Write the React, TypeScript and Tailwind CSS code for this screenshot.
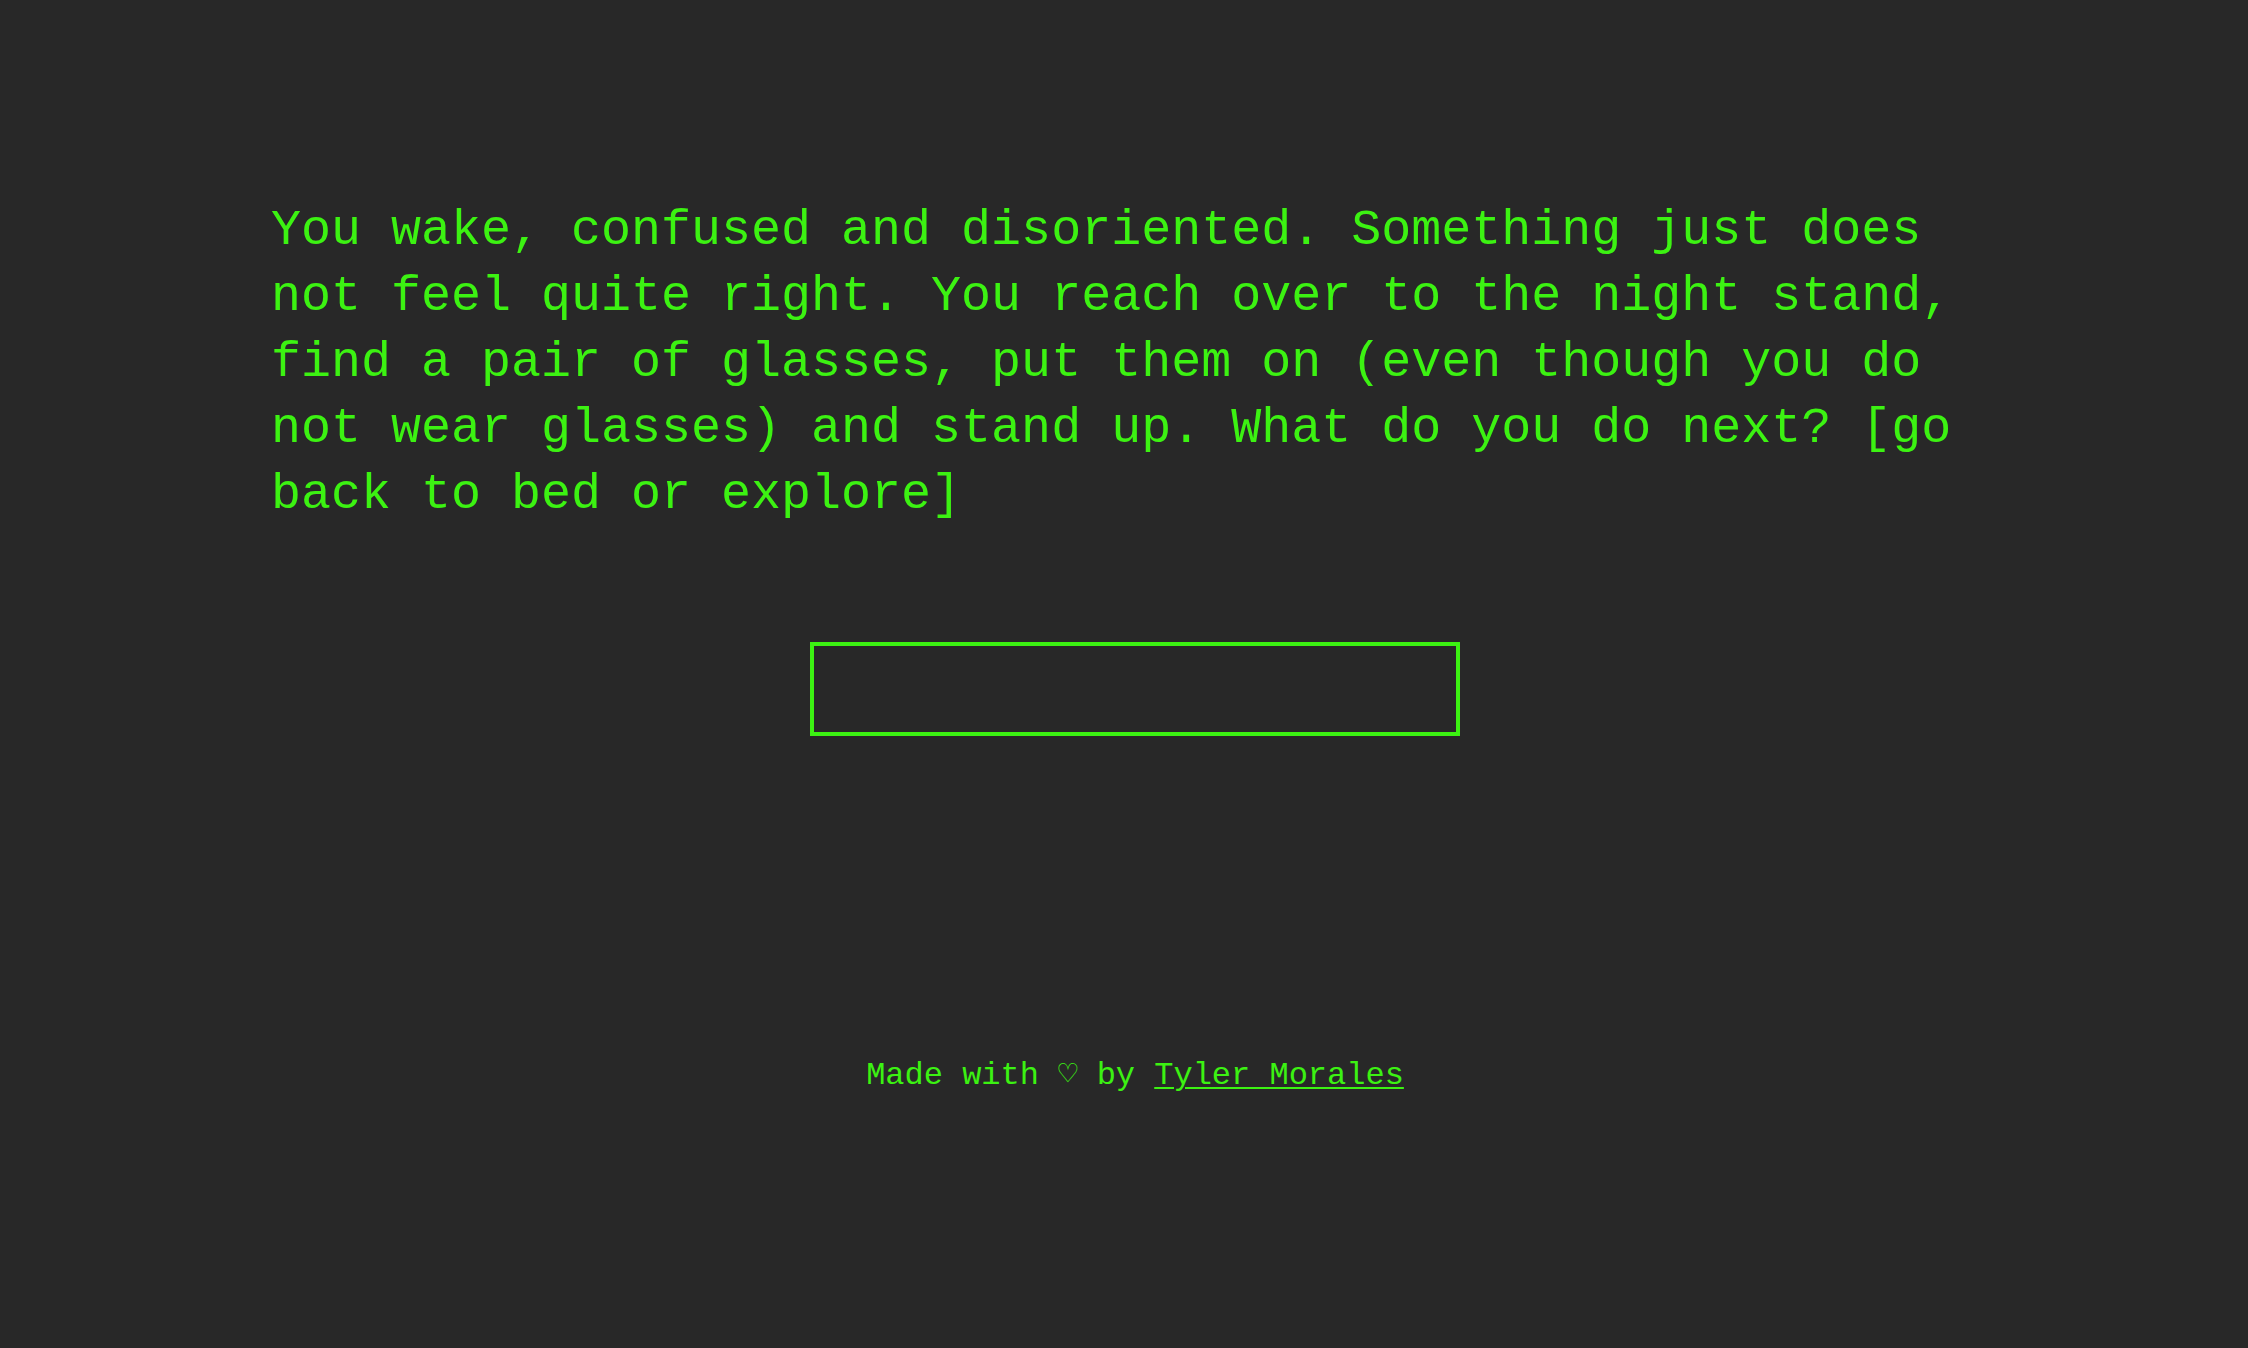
import React from "react";

export default function App() {
  return (
    <div
      className="min-h-[1348px] w-full bg-[#282828] text-[#3cf212]"
      style={{ fontFamily: '"Liberation Mono", "DejaVu Sans Mono", monospace' }}
    >
      <div className="flex flex-col items-center pl-[22px] pt-[198px]">
        <p className="w-[1728px] text-[50px] leading-[66px]">
          You wake, confused and disoriented. Something just does not feel quite right. You reach over to the night stand, find a pair of glasses, put them on (even though you do not wear glasses) and stand up. What do you do next? [go back to bed or explore]
        </p>
        <input
          type="text"
          aria-label="answer"
          className="mt-[114px] h-[94px] w-[650px] border-4 border-[#3cf212] bg-transparent px-4 text-[40px] text-[#3cf212] outline-none"
          style={{ fontFamily: '"Liberation Mono", "DejaVu Sans Mono", monospace' }}
        />
        <footer className="mt-[320px] text-[32px] leading-[40px]">
          Made with ♡ by{" "}
          <a href="#" className="underline decoration-2 underline-offset-[3px]">
            Tyler Morales
          </a>
        </footer>
      </div>
    </div>
  );
}
